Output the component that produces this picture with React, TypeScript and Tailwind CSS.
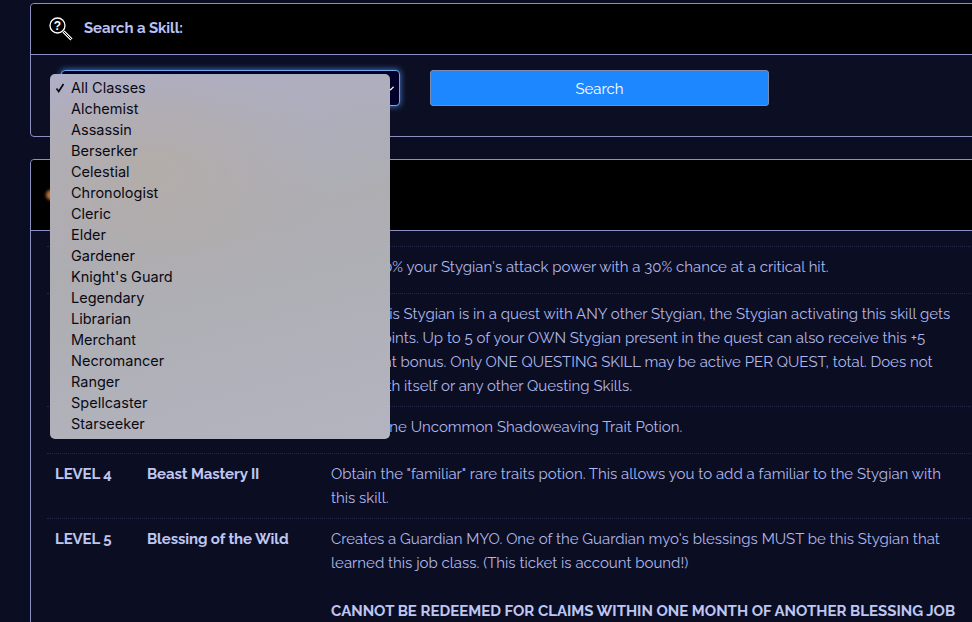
import React from 'react';
import { ChevronDown } from 'lucide-react';

const classes = ['All Classes', 'Alchemist', 'Assassin', 'Berserker', 'Celestial', 'Chronologist', 'Cleric', 'Elder', 'Gardener', "Knight's Guard", 'Legendary', 'Librarian', 'Merchant', 'Necromancer', 'Ranger', 'Spellcaster', 'Starseeker'];

function SearchIcon() {
  return (
    <svg width="24" height="24" viewBox="0 0 24 24" fill="none" className="shrink-0">
      <circle cx="8.5" cy="8.5" r="7.5" stroke="white" strokeWidth="1.3" />
      <path d="M14.5 14.5L22.5 22.5" stroke="white" strokeWidth="3" />
      <path d="M14.5 14.5L22.5 22.5" stroke="black" strokeWidth="1" />
      <text x="8.5" y="12.8" textAnchor="middle" fill="white" fontSize="12" fontWeight="700" fontFamily="Liberation Sans, sans-serif">?</text>
    </svg>
  );
}

function Row({ level, name, children, h }: { level: string; name: string; children: React.ReactNode; h: string }) {
  return (
    <div className={`flex border-b border-dotted border-[#23274a] ${h}`}>
      <div className="w-[92px] pl-[8px] pt-[8px] font-bold tracking-[-0.1px] text-[#bfc6f2]">{level}</div>
      <div className="w-[184px] pl-[8px] pt-[8px] font-bold tracking-[-0.1px] text-[#bfc6f2]">{name}</div>
      <div className="w-[634px] pl-[8px] pt-[8px] text-[#b0b7ea]">{children}</div>
    </div>
  );
}

export default function App() {
  return (
    <div className="relative h-[622px] w-[972px] overflow-hidden bg-[#0b0e22] pl-[30px] pt-[3px] font-['Raleway','Lato',sans-serif] text-[15px] leading-[24px]">
      <div className="w-[980px]">
        <section className="h-[134px] rounded-[4px] border border-[#8b8fc4] bg-[#0c0f24]">
          <div className="flex h-[51px] items-center gap-[11px] rounded-t-[4px] border-b border-[#8b8fc4] bg-black pl-[18px]">
            <SearchIcon />
            <h2 className="pb-[2px] font-bold tracking-[-0.1px] text-[#b9c1f5]">Search a Skill:</h2>
          </div>
          <div className="flex gap-[30px] pl-[30px] pt-[15px]">
            <div className="flex h-[36px] w-[339px] items-center justify-end rounded-[4px] border border-[#6fa8e8] bg-[#00002a] pr-[3px] shadow-[0_0_6px_#4b84d6]">
              <ChevronDown className="h-[11px] w-[11px] text-white" strokeWidth={3} />
            </div>
            <button className="h-[36px] w-[339px] rounded-[3px] border border-[#7c8bb0] bg-[#1d87ff] pt-[1px] text-white">Search</button>
          </div>
        </section>
        <section className="mt-[22px] rounded-[4px] border border-[#8b8fc4] bg-[#0b0e22]">
          <div className="relative h-[71px] rounded-t-[4px] border-b border-[#8b8fc4] bg-black">
            <div className="absolute left-[15px] top-[30px] h-[10px] w-[10px] rounded-full bg-[#c0702f] blur-[1.5px]" />
          </div>
          <div className="pl-[16px] pt-[15px]">
            <div className="border-t border-dotted border-[#23274a]">
              <Row level="LEVEL 1" name="" h="h-[47px]">Deal 200% your Stygian's attack power with a 30% chance at a critical hit.</Row>
              <Row level="LEVEL 2" name="" h="h-[113px]">
                While this Stygian is in a quest with ANY other Stygian, the Stygian activating this skill gets
                <br />5 trait points. Up to 5 of your OWN Stygian present in the quest can also receive this +5
                <br />trait point bonus. Only ONE QUESTING SKILL may be active PER QUEST, total. Does not
                <br />stack with itself or any other Questing Skills.
              </Row>
              <Row level="LEVEL 3" name="" h="h-[47px]">Obtain one Uncommon Shadoweaving Trait Potion.</Row>
              <Row level="LEVEL 4" name="Beast Mastery II" h="h-[65px]">Obtain the "familiar" rare traits potion. This allows you to add a familiar to the Stygian with this skill.</Row>
              <Row level="LEVEL 5" name="Blessing of the Wild" h="h-[200px]">
                Creates a Guardian MYO. One of the Guardian myo's blessings MUST be this Stygian that learned this job class. (This ticket is account bound!)
                <br /><br />
                <b className="text-[#bfc6f2]">CANNOT BE REDEEMED FOR CLAIMS WITHIN ONE MONTH OF ANOTHER BLESSING JOB</b>
              </Row>
            </div>
          </div>
        </section>
      </div>
      <ul className="absolute left-[50px] top-[74px] h-[365px] w-[340px] rounded-[5px] bg-[radial-gradient(ellipse_180px_120px_at_30%_27%,#b3aca8_0%,rgba(179,172,168,0)_100%),linear-gradient(165deg,#afafc8_0%,#adadb2_45%,#b3b4bf_100%)] pt-[3px] font-['Inter',sans-serif] text-[14.5px] leading-[21px] text-[#0a0a14]">
        {classes.map((c, i) => (
          <li key={c} className="relative pl-[21px]">
            {i === 0 && (
              <svg width="10" height="10" viewBox="0 0 10 10" fill="none" className="absolute left-[5px] top-[6px]">
                <path d="M1.5 5.5L3.7 8.5L8.5 1" stroke="#0a0a14" strokeWidth="1.7" />
              </svg>
            )}
            {c}
          </li>
        ))}
      </ul>
    </div>
  );
}
